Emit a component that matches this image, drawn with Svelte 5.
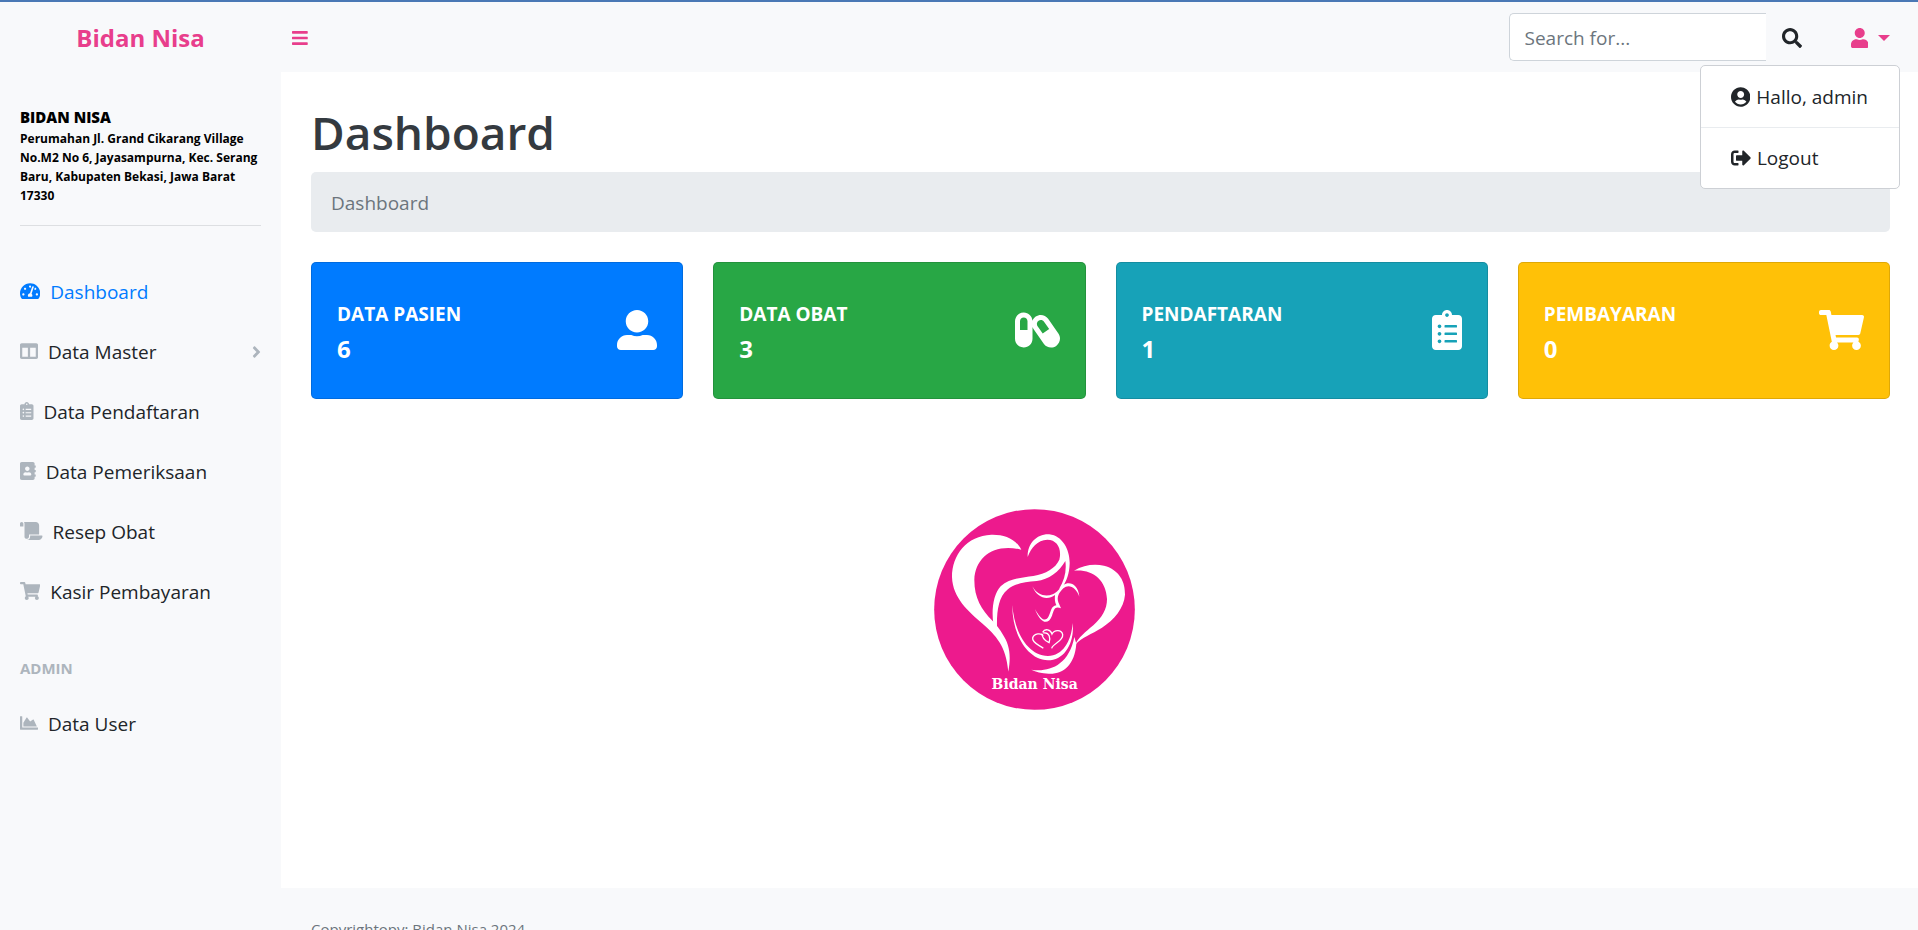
<script>
  let menuOpen = $state(true)
  let sidebarOpen = $state(true)
  let query = $state('')

  // [width of the viewBox, path]; all icons are 512 units high
  const icons = {
    bars: [448, 'M16 132h416c8.8 0 16-7.2 16-16V76c0-8.8-7.2-16-16-16H16C7.2 60 0 67.2 0 76v40c0 8.8 7.2 16 16 16zm0 160h416c8.8 0 16-7.2 16-16v-40c0-8.8-7.2-16-16-16H16c-8.8 0-16 7.2-16 16v40c0 8.8 7.2 16 16 16zm0 160h416c8.8 0 16-7.2 16-16v-40c0-8.8-7.2-16-16-16H16c-8.8 0-16 7.2-16 16v40c0 8.8 7.2 16 16 16z'],
    search: [512, 'M505 442.7L405.3 343c-4.5-4.5-10.6-7-17-7H372c27.6-35.3 44-79.7 44-128C416 93.1 322.9 0 208 0S0 93.1 0 208s93.1 208 208 208c48.3 0 92.7-16.4 128-44v16.3c0 6.4 2.5 12.5 7 17l99.7 99.7c9.4 9.4 24.6 9.4 33.9 0l28.3-28.3c9.4-9.4 9.4-24.6.1-34zM208 336c-70.7 0-128-57.2-128-128 0-70.7 57.2-128 128-128 70.7 0 128 57.2 128 128 0 70.7-57.2 128-128 128z'],
    user: [448, 'M224 256c70.7 0 128-57.3 128-128S294.7 0 224 0 96 57.3 96 128s57.3 128 128 128zm89.6 32h-16.7c-22.2 10.2-46.9 16-72.9 16s-50.6-5.8-72.9-16h-16.7C60.2 288 0 348.2 0 422.4V464c0 26.5 21.5 48 48 48h352c26.5 0 48-21.5 48-48v-41.6c0-74.2-60.2-134.4-134.4-134.4z'],
    userAlt: [512, 'M256 288c79.5 0 144-64.5 144-144S335.5 0 256 0 112 64.5 112 144s64.5 144 144 144zm128 32h-55.1c-22.2 10.2-46.9 16-72.9 16s-50.6-5.8-72.9-16H128C57.3 320 0 377.3 0 448v16c0 26.5 21.5 48 48 48h416c26.5 0 48-21.5 48-48v-16c0-70.7-57.3-128-128-128z'],
    userCircle: [496, 'M248 8C111 8 0 119 0 256s111 248 248 248 248-111 248-248S385 8 248 8zm0 96c48.6 0 88 39.4 88 88s-39.4 88-88 88-88-39.4-88-88 39.4-88 88-88zm0 344c-58.7 0-111.3-26.6-146.5-68.2 18.8-35.4 55.6-59.8 98.5-59.8 2.4 0 4.8.4 7.1 1.1 13 4.2 26.6 6.9 40.9 6.9 14.3 0 28-2.7 40.9-6.9 2.3-.7 4.7-1.1 7.1-1.1 42.9 0 79.7 24.4 98.5 59.8C359.3 421.4 306.7 448 248 448z'],
    signOut: [512, 'M497 273L329 441c-15 15-41 4.5-41-17v-96H152c-13.3 0-24-10.7-24-24v-96c0-13.3 10.7-24 24-24h136V88c0-21.4 25.9-32 41-17l168 168c9.3 9.4 9.3 24.6 0 34zM192 436v-40c0-6.6-5.4-12-12-12H96c-17.7 0-32-14.3-32-32V160c0-17.7 14.3-32 32-32h84c6.6 0 12-5.4 12-12V76c0-6.6-5.4-12-12-12H96c-53 0-96 43-96 96v192c0 53 43 96 96 96h84c6.6 0 12-5.4 12-12z'],
    tachometer: [576, 'M288 32C128.94 32 0 160.94 0 320c0 52.8 14.25 102.26 39.06 144.8 5.61 9.62 16.3 15.2 27.44 15.2h443c11.14 0 21.83-5.58 27.44-15.2C561.75 422.26 576 372.8 576 320c0-159.06-128.94-288-288-288zm0 64c14.71 0 26.58 10.13 30.32 23.65-1.11 2.26-2.64 4.23-3.45 6.67l-9.22 27.67c-5.13 3.49-10.97 6.01-17.64 6.01-17.67 0-32-14.33-32-32S270.33 96 288 96zM96 384c-17.67 0-32-14.33-32-32s14.33-32 32-32 32 14.33 32 32-14.33 32-32 32zm48-160c-17.67 0-32-14.33-32-32s14.33-32 32-32 32 14.33 32 32-14.33 32-32 32zm246.77-72.41l-61.33 184C343.13 347.33 352 364.54 352 384c0 11.72-3.38 22.55-8.88 32H232.88c-5.5-9.45-8.88-20.28-8.88-32 0-33.94 26.5-61.43 59.9-63.59l61.34-184.01c4.17-12.56 17.73-19.45 30.36-15.17 12.57 4.19 19.35 17.79 15.17 30.36zm14.66 57.2l15.52-46.55c3.47-1.29 7.13-2.23 11.05-2.23 17.67 0 32 14.33 32 32s-14.33 32-32 32c-11.38-.01-20.89-6.28-26.57-15.22zM480 384c-17.67 0-32-14.33-32-32s14.33-32 32-32 32 14.33 32 32-14.33 32-32 32z'],
    columns: [512, 'M464 32H48C21.49 32 0 53.49 0 80v352c0 26.51 21.49 48 48 48h416c26.51 0 48-21.49 48-48V80c0-26.51-21.49-48-48-48zM224 416H64V160h160v256zm224 0H288V160h160v256z'],
    clipboard: [384, 'M336 64h-80c0-35.3-28.7-64-64-64s-64 28.7-64 64H48C21.5 64 0 85.5 0 112v352c0 26.5 21.5 48 48 48h288c26.5 0 48-21.5 48-48V112c0-26.5-21.5-48-48-48zM96 424c-13.3 0-24-10.7-24-24s10.7-24 24-24 24 10.7 24 24-10.7 24-24 24zm0-96c-13.3 0-24-10.7-24-24s10.7-24 24-24 24 10.7 24 24-10.7 24-24 24zm0-96c-13.3 0-24-10.7-24-24s10.7-24 24-24 24 10.7 24 24-10.7 24-24 24zm96-192c13.3 0 24 10.7 24 24s-10.7 24-24 24-24-10.7-24-24 10.7-24 24-24zm128 368c0 4.4-3.6 8-8 8H168c-4.4 0-8-3.6-8-8v-16c0-4.4 3.6-8 8-8h144c4.4 0 8 3.6 8 8v16zm0-96c0 4.4-3.6 8-8 8H168c-4.4 0-8-3.6-8-8v-16c0-4.4 3.6-8 8-8h144c4.4 0 8 3.6 8 8v16zm0-96c0 4.4-3.6 8-8 8H168c-4.4 0-8-3.6-8-8v-16c0-4.4 3.6-8 8-8h144c4.4 0 8 3.6 8 8v16z'],
    addressBook: [448, 'M436 160c6.6 0 12-5.4 12-12v-40c0-6.6-5.4-12-12-12h-20V48c0-26.5-21.5-48-48-48H48C21.5 0 0 21.5 0 48v416c0 26.5 21.5 48 48 48h320c26.5 0 48-21.5 48-48v-48h20c6.6 0 12-5.4 12-12v-40c0-6.6-5.4-12-12-12h-20v-64h20c6.6 0 12-5.4 12-12v-40c0-6.6-5.4-12-12-12h-20v-64h20zm-228-32c35.3 0 64 28.7 64 64s-28.7 64-64 64-64-28.7-64-64 28.7-64 64-64zm112 236.8c0 10.6-10 19.2-22.4 19.2H118.4C106 384 96 375.4 96 364.8v-19.2c0-31.8 30.1-57.6 67.2-57.6h5c12.3 5.1 25.7 8 39.8 8s27.6-2.9 39.8-8h5c37.1 0 67.2 25.8 67.2 57.6v19.2z'],
    scroll: [640, 'M48 0C21.53 0 0 21.53 0 48v64c0 8.84 7.16 16 16 16h80V48C96 21.53 74.47 0 48 0zm208 412.57V352h288V96c0-52.94-43.06-96-96-96H111.59C121.74 13.41 128 29.92 128 48v368c0 38.87 34.65 69.65 74.75 63.12C234.22 474 256 444.46 256 412.57zM288 384v32c0 52.93-43.06 96-96 96h336c61.86 0 112-50.14 112-112 0-8.84-7.16-16-16-16H288z'],
    cart: [576, 'M528.12 301.319l47.273-208C578.806 78.301 567.391 64 551.99 64H159.208l-9.166-44.81C147.758 8.021 137.93 0 126.529 0H24C10.745 0 0 10.745 0 24v16c0 13.255 10.745 24 24 24h69.883l70.248 343.435C147.325 417.1 136 435.222 136 456c0 30.928 25.072 56 56 56s56-25.072 56-56c0-15.674-6.447-29.835-16.824-40h209.647C430.447 426.165 424 440.326 424 456c0 30.928 25.072 56 56 56s56-25.072 56-56c0-22.172-12.888-41.332-31.579-50.405l5.517-24.276c3.413-15.018-8.002-29.319-23.403-29.319H218.117l-6.545-32h293.145c11.206 0 20.92-7.754 23.403-18.681z'],
    chartArea: [512, 'M500 384c6.6 0 12 5.4 12 12v40c0 6.6-5.4 12-12 12H12c-6.6 0-12-5.4-12-12V76c0-6.6 5.4-12 12-12h40c6.6 0 12 5.4 12 12v308h436zM372.7 159.5L288 216l-85.3-113.7c-5.1-6.8-15.5-6.3-19.9 1L96 248v104h384l-89.9-187.8c-3.2-6.5-11.4-8.7-17.4-4.7z'],
    angleRight: [256, 'M224.3 273l-136 136c-9.4 9.4-24.6 9.4-33.9 0l-22.6-22.6c-9.4-9.4-9.4-24.6 0-33.9l96.4-96.4-96.4-96.4c-9.4-9.4-9.4-24.6 0-33.9L54.3 103c9.4-9.4 24.6-9.4 33.9 0l136 136c9.5 9.4 9.5 24.6.1 34z'],
    capsules: [576, 'M555.3 300.1L424.2 112.8C401.9 81 366.4 64 330.4 64c-22.6 0-45.5 6.7-65.5 20.7-19.7 13.8-33.7 32.8-41.5 53.8C220.5 79.2 172 32 112 32 50.1 32 0 82.1 0 144v224c0 61.9 50.1 112 112 112s112-50.1 112-112V218.9c3.3 8.6 7.3 17.1 12.8 25L368 431.2c22.2 31.8 57.7 48.8 93.8 48.8 22.7 0 45.5-6.7 65.5-20.7 51.7-36.2 64.2-107.5 28-159.2zM160 256H64V144c0-26.5 21.5-48 48-48s48 21.5 48 48v112zm194.8 44.9l-65.6-93.7c-7.7-11-10.7-24.4-8.3-37.6 2.3-13.2 9.7-24.8 20.7-32.5 8.5-6 18.5-9.1 28.8-9.1 16.5 0 31.9 8 41.3 21.5l65.6 93.7-82.5 57.7z'],
  }

  const links = [
    { label: 'Dashboard', icon: 'tachometer', active: true },
    { label: 'Data Master', icon: 'columns', nested: true },
    { label: 'Data Pendaftaran', icon: 'clipboard' },
    { label: 'Data Pemeriksaan', icon: 'addressBook' },
    { label: 'Resep Obat', icon: 'scroll' },
    { label: 'Kasir Pembayaran', icon: 'cart' },
  ]

  const adminLinks = [{ label: 'Data User', icon: 'chartArea' }]

  const cards = [
    { title: 'DATA PASIEN', value: 6, icon: 'userAlt', color: 'primary' },
    { title: 'DATA OBAT', value: 3, icon: 'capsules', color: 'success' },
    { title: 'PENDAFTARAN', value: 1, icon: 'clipboard', color: 'info' },
    { title: 'PEMBAYARAN', value: 0, icon: 'cart', color: 'warning' },
  ]
</script>

{#snippet icon(name)}
  <svg class="icon" viewBox="0 0 {icons[name][0]} 512" aria-hidden="true">
    <path d={icons[name][1]} />
  </svg>
{/snippet}

{#snippet navLink(link)}
  <a class="nav-link" class:active={link.active} href="#top">
    {@render icon(link.icon)}
    <span>{link.label}</span>
    {#if link.nested}
      <span class="arrow">{@render icon('angleRight')}</span>
    {/if}
  </a>
{/snippet}

<div class="page" id="top">
  <header class="topbar">
    <a class="brand" href="#top">Bidan Nisa</a>
    <button class="toggle" aria-label="Toggle sidebar" onclick={() => (sidebarOpen = !sidebarOpen)}>
      {@render icon('bars')}
    </button>

    <form class="search" onsubmit={(e) => e.preventDefault()}>
      <input type="text" placeholder="Search for..." aria-label="Search for" bind:value={query} />
      <button aria-label="Search">{@render icon('search')}</button>
    </form>

    <div class="user">
      <button class="user-btn" aria-label="User menu" onclick={() => (menuOpen = !menuOpen)}>
        {@render icon('user')}
        <span class="caret"></span>
      </button>
      {#if menuOpen}
        <div class="menu">
          <a href="#top">{@render icon('userCircle')}Hallo, admin</a>
          <a href="#top">{@render icon('signOut')}Logout</a>
        </div>
      {/if}
    </div>
  </header>

  <div class="layout">
    {#if sidebarOpen}
      <nav class="sidebar">
        <div class="clinic">
          <strong>BIDAN NISA</strong>
          <address>
            Perumahan Jl. Grand Cikarang Village No.M2 No 6, Jayasampurna, Kec. Serang Baru, Kabupaten Bekasi, Jawa Barat 17330
          </address>
        </div>
        {#each links as link}
          {@render navLink(link)}
        {/each}
        <div class="heading">ADMIN</div>
        {#each adminLinks as link}
          {@render navLink(link)}
        {/each}
      </nav>
    {/if}

    <div class="content">
      <main>
        <h1>Dashboard</h1>
        <ol class="breadcrumb">
          <li>Dashboard</li>
        </ol>

        <div class="cards">
          {#each cards as card}
            <div class="card {card.color}">
              <div class="card-text">
                <div>{card.title}</div>
                <div class="card-value">{card.value}</div>
              </div>
              {@render icon(card.icon)}
            </div>
          {/each}
        </div>

        <div class="logo">
          <svg viewBox="42 28 603 603" role="img" aria-label="Bidan Nisa">
            <circle cx="343.5" cy="329.5" r="301" fill="#ed1a8d" />
            <g fill="#fff">
              <!-- left heart half, running down into the shoulder -->
              <path d="M304 150C286 116 252 104 214 105C140 108 96 166 96 232C98 296 146 335 186 371C228 408 258 438 265 516C274 466 268 434 248 404C240 390 230 376 218 364C184 328 163 296 163 240C166 172 222 130 304 150Z" />
              <!-- right heart half -->
              <path d="M462 213C490 196 522 192 552 198C598 210 616 246 615 285C612 326 582 360 546 384C514 404 486 412 466 435C474 414 498 396 520 377C546 352 561 330 561 298C558 240 518 208 462 213Z" />
              <!-- mother's hair -->
              <path d="M323 172C322 132 350 102 388 104C428 108 450 152 449 192C448 222 440 242 428 262L417 268C434 240 440 214 436 184C418 216 386 240 350 244C312 247 284 252 262 270C236 292 230 332 231 382L220 372C214 330 220 284 242 260C268 236 306 234 340 229C378 222 406 206 418 180C426 148 412 120 382 120C352 122 334 142 323 172Z" />
              <!-- arms around the child -->
              <path d="M277 317C283 396 322 468 384 469C428 468 454 426 458 370C464 432 432 482 384 482C318 480 276 398 277 317Z" />
              <path d="M334 510C384 518 446 500 463 412L469 432C464 496 430 524 386 522C364 521 348 516 334 510Z" />
              <!-- both faces -->
              <path d="M337 260C352 288 378 292 398 284C412 278 418 266 430 256C448 244 474 252 478 291C468 262 446 252 430 266C416 280 410 292 415 308L423 326C404 318 402 330 396 348C384 378 362 372 344 327C362 358 376 370 386 350C394 334 392 320 409 317C404 306 404 298 405 286C384 302 352 298 337 260Z" />
            </g>
            <g class="hearts">
              <path d="M370 408C364 400 342 400 338 415C336 430 358 436 370 446" />
              <path d="M368 398C375 385 392 390 396 403C402 390 425 388 428 405C430 425 400 430 395 446" />
              <path d="M370 400C388 396 393 416 387 431M366 402C366 414 374 422 386 428" />
            </g>
            <text x="344" y="568" text-anchor="middle">Bidan Nisa</text>
          </svg>
        </div>
      </main>

      <footer>Copyrightopy; Bidan Nisa 2024</footer>
    </div>
  </div>
</div>

<style>
  :global(body) {
    margin: 0;
    background: #fff;
  }

  .page {
    font-family: 'Open Sans', 'Noto Sans', sans-serif;
    font-size: 19px;
    line-height: 30px;
    color: #212529;
    border-top: 2px solid #4a78b5;
  }

  .page * {
    box-sizing: border-box;
  }

  a {
    color: inherit;
    text-decoration: none;
  }

  button {
    display: flex;
    align-items: center;
    padding: 0;
    border: 0;
    background: none;
    color: inherit;
    cursor: pointer;
  }

  .icon {
    height: 20px;
    flex: none;
    fill: currentColor;
  }

  .topbar {
    display: flex;
    align-items: center;
    height: 70px;
    padding-right: 28px;
    background: #f8f9fb;
    color: #e83e8c;
  }

  .brand {
    width: 281px;
    padding-top: 2px;
    font-size: 24px;
    font-weight: 700;
    text-align: center;
  }

  .toggle {
    padding: 2px 11px 0;
  }

  .toggle .icon,
  .nav-link .icon {
    height: 18px;
  }

  .search {
    display: flex;
    margin-left: auto;
    color: #212529;
  }

  .search input {
    width: 257px;
    height: 48px;
    padding: 2px 15px 0;
    border: 1px solid #ced4da;
    border-right: 0;
    border-radius: 5px 0 0 5px;
    background: #fff;
    font: inherit;
    color: #495057;
  }

  .search input::placeholder {
    color: #6c757d;
    opacity: 1;
  }

  .search button {
    padding: 2px 16px 0;
  }

  .user {
    position: relative;
    margin-left: 33px;
  }

  .user-btn {
    gap: 10px;
    height: 48px;
    padding-top: 2px;
  }

  .caret {
    border: 6px solid transparent;
    border-top-color: currentColor;
    border-bottom: 0;
  }

  .menu {
    position: absolute;
    top: 52px;
    right: -10px;
    z-index: 1;
    border: 1px solid #cdd0d5;
    border-radius: 5px;
    background: #fff;
    color: #212529;
  }

  .menu a {
    display: flex;
    align-items: center;
    gap: 6px;
    height: 61px;
    padding: 0 31px 0 30px;
    white-space: nowrap;
  }

  .menu a + a {
    border-top: 1px solid #e9ecef;
  }

  .layout {
    display: flex;
    min-height: calc(100vh - 72px);
  }

  .sidebar {
    flex: none;
    width: 281px;
    background: #f8f9fb;
  }

  .clinic {
    margin: 0 20px 36px;
    padding: 34px 0 20px;
    border-bottom: 1px solid #dddfe2;
    color: #000;
    font-weight: 700;
  }

  .clinic strong {
    display: block;
    font-size: 15px;
    line-height: 23px;
  }

  .clinic address {
    font-size: 12px;
    font-style: normal;
    line-height: 19px;
  }

  .nav-link {
    display: flex;
    align-items: center;
    gap: 10px;
    padding: 15px 20px;
  }

  .nav-link .icon {
    margin-bottom: 3px;
    color: #adb5bd;
  }

  .nav-link.active,
  .nav-link.active .icon {
    color: #007bff;
  }

  .arrow {
    display: flex;
    margin-left: auto;
  }

  .nav-link .arrow .icon {
    margin-bottom: 0;
  }

  .heading {
    padding: 35px 20px 15px;
    font-size: 15px;
    font-weight: 700;
    line-height: 22px;
    color: #adb5bd;
  }

  .content {
    display: flex;
    flex: 1;
    flex-direction: column;
    min-width: 0;
  }

  main {
    min-height: calc(100vh - 114px);
    padding: 30px 28px 0 30px;
  }

  h1 {
    margin: 0 0 10px;
    font-size: 46px;
    font-weight: 600;
    line-height: 60px;
    color: #343a40;
  }

  .breadcrumb {
    margin: 0 0 30px;
    padding: 16px 20px 14px;
    border-radius: 5px;
    background: #e9ecef;
    color: #6c757d;
    list-style: none;
  }

  .cards {
    display: grid;
    grid-template-columns: repeat(4, 1fr);
    gap: 30px;
  }

  .card {
    display: flex;
    align-items: center;
    justify-content: space-between;
    height: 137px;
    padding: 0 25px;
    border: 1px solid rgba(0, 0, 0, 0.125);
    border-radius: 5px;
    color: #fff;
    font-weight: 700;
  }

  .card .icon {
    height: 40px;
    margin-bottom: 2px;
  }

  .card-text {
    padding-top: 6px;
  }

  .card-value {
    font-size: 24px;
    line-height: 40px;
  }

  .primary {
    background: #007bff;
  }

  .success {
    background: #28a745;
  }

  .info {
    background: #17a2b8;
  }

  .warning {
    background: #ffc107;
  }

  .logo {
    display: flex;
    justify-content: center;
    padding: 110px 132px 0 0;
  }

  .logo svg {
    width: 201px;
  }

  .logo text {
    fill: #fff;
    font-family: 'DejaVu Serif', serif;
    font-size: 42px;
    font-weight: 700;
  }

  .hearts {
    fill: none;
    stroke: #fff;
    stroke-width: 4;
  }

  footer {
    padding: 29px 30px 30px;
    background: #f8f9fb;
    color: #6c757d;
    font-size: 15px;
    line-height: 24px;
  }
</style>
